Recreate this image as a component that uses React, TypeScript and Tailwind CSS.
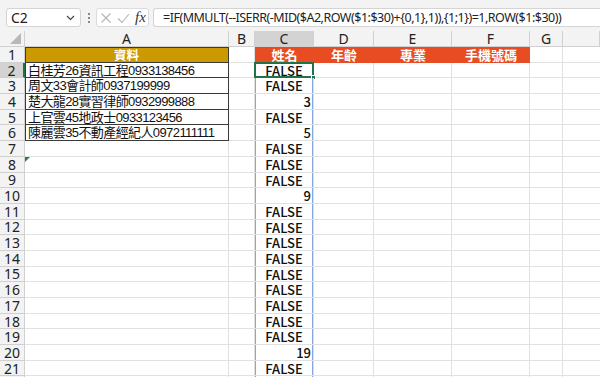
import React from 'react';

const FORMULA = '=IF(MMULT(--ISERR(-MID($A2,ROW($1:$30)+{0,1},1)),{1;1})=1,ROW($1:$30))';

const COLS = ['A', 'B', 'C', 'D', 'E', 'F', 'G', ''];

const A_DATA = [
  '資料',
  '白桂芳26資訊工程0933138456',
  '周文33會計師0937199999',
  '楚大龍28實習律師0932999888',
  '上官雲45地政士0933123456',
  '陳麗雲35不動產經紀人0972111111',
];

const HEADS: Record<number, string> = { 3: '姓名', 4: '年齡', 5: '專業', 6: '手機號碼' };

// spill results of C2:C23
const C_DATA: (string | number)[] = [
  'FALSE', 'FALSE', 3, 'FALSE', 5, 'FALSE', 'FALSE', 'FALSE', 9, 'FALSE',
  'FALSE', 'FALSE', 'FALSE', 'FALSE', 'FALSE', 'FALSE', 'FALSE', 'FALSE', 19, 'FALSE', 'FALSE',
];

const cellFont = { fontFamily: '"Noto Sans CJK TC", "Noto Sans", sans-serif' };
// digits in column A are fixed width in the original, so latin comes from Liberation Sans
const dataFont = { fontFamily: '"Liberation Sans", "Noto Sans CJK TC", sans-serif' };
const uiFont = { fontFamily: '"Noto Sans", "Open Sans", sans-serif' };

function FormulaBar() {
  return (
    <div className="flex h-[31px] items-start bg-[#f3f3f3] pt-[8px] pl-[6px]" style={uiFont}>
      <div className="flex h-[19px] w-[75px] items-center justify-between rounded-[3px] border border-[#d4d4d4] bg-white pl-[4px] pr-[5px] text-[14px] leading-[17px] text-[#222]">
        <span>C2</span>
        <svg width="9" height="6" viewBox="0 0 9 6">
          <path d="M1 1l3.5 3.5L8 1" stroke="#444" strokeWidth="1.2" fill="none" />
        </svg>
      </div>
      <div className="ml-[6px] flex h-[19px] w-[3px] flex-col items-center justify-center gap-[2px]">
        <span className="h-[2px] w-[2px] bg-[#888]" />
        <span className="h-[2px] w-[2px] bg-[#888]" />
        <span className="h-[2px] w-[2px] bg-[#888]" />
      </div>
      <div className="ml-[6px] flex h-[19px] w-[53px] items-center rounded-[3px] border border-[#dcdcdc] bg-white pl-[3px]">
        <svg width="12" height="12" viewBox="0 0 12 12">
          <path d="M1.5 1.5l9 9M10.5 1.5l-9 9" stroke="#b4b4b4" strokeWidth="1.1" />
        </svg>
        <svg className="ml-[5px]" width="13" height="12" viewBox="0 0 13 12">
          <path d="M1 6.5l4 4L12 2" stroke="#b4b4b4" strokeWidth="1.1" fill="none" />
        </svg>
        <span
          className="ml-[5px] text-[15px] leading-none italic text-[#333]"
          style={{ fontFamily: '"Liberation Serif", serif' }}
        >
          fx
        </span>
      </div>
      <div className="ml-[4px] flex h-[19px] flex-1 items-center overflow-hidden whitespace-nowrap rounded-l-[3px] border border-r-0 border-[#d4d4d4] bg-white pl-[9px] text-[12.5px] leading-[17px] tracking-[-0.5px] text-[#222]">
        {FORMULA}
      </div>
    </div>
  );
}

function ColumnHeaders() {
  return (
    <>
      <div className="flex items-end justify-end border-r border-b border-[#d0d0d0] bg-[#f3f3f3] pr-[3px] pb-[2px]">
        <svg width="11" height="11" viewBox="0 0 11 11">
          <polygon points="11,0 11,11 0,11" fill="#b8b8b8" />
        </svg>
      </div>
      {COLS.map((c, i) => (
        <div
          key={i}
          className={
            'flex items-center justify-center border-r border-b border-[#d0d0d0] text-[14px] leading-[15px] text-[#222] ' +
            (c === 'C' ? 'bg-[#d3d3d3]' : 'bg-[#f3f3f3]')
          }
          style={uiFont}
        >
          {c}
        </div>
      ))}
    </>
  );
}

function Row({ r }: { r: number }) {
  const aText = A_DATA[r - 1];
  const inTable = r <= 6;
  const cVal = r >= 2 ? C_DATA[r - 2] : undefined;

  return (
    <>
      <div
        className={
          'flex items-center justify-center border-b border-[#d0d0d0] text-[14px] leading-[15px] text-[#222] ' +
          (r === 2 ? 'border-r-2 border-r-[#217346] bg-[#d3d3d3]' : 'border-r bg-[#f3f3f3]')
        }
        style={uiFont}
      >
        {r}
      </div>

      {/* A */}
      <div
        className={
          'relative whitespace-nowrap border-r border-b leading-[15px] ' +
          (r === 1
            ? 'border-[#3a3a3a] bg-[#cc9900] text-center text-[12.5px] font-bold text-white shadow-[inset_1px_1px_0_#3a3a3a]'
            : inTable
            ? 'border-[#3a3a3a] pl-[3px] text-[13px] tracking-[-0.6px] text-[#111] shadow-[inset_1px_0_0_#3a3a3a]'
            : 'border-[#e1e1e1]')
        }
        style={r === 1 ? cellFont : dataFont}
      >
        {aText}
        {r === 8 && (
          <span className="absolute top-0 left-0 h-0 w-0 border-t-[5px] border-r-[5px] border-t-[#1e8a3c] border-r-transparent" />
        )}
      </div>

      {/* B */}
      <div className="border-r border-b border-[#e1e1e1]" />

      {/* C */}
      {r === 1 ? (
        <div
          className="flex items-center justify-center border-b border-[#e84c22] bg-[#e84c22] text-[13px] leading-[15px] font-bold text-white"
          style={cellFont}
        >
          {HEADS[3]}
        </div>
      ) : (
        <div
          className={
            'relative border-r border-b border-[#e1e1e1] text-[13px] leading-[15px] font-medium text-[#111] shadow-[inset_1px_0_0_#86a6e2,inset_-1px_0_0_#86a6e2] ' +
            (typeof cVal === 'number' ? 'pr-[2px] text-right' : 'text-center')
          }
          style={cellFont}
        >
          {cVal}
          {r === 2 && (
            <>
              <span className="absolute -top-px -left-px -right-px -bottom-px border-2 border-[#217346]" />
              <span className="absolute -right-[3px] -bottom-[3px] h-[5px] w-[5px] border border-white bg-[#217346]" />
            </>
          )}
        </div>
      )}

      {/* D E F */}
      {[4, 5, 6].map((ci) =>
        r === 1 ? (
          <div
            key={ci}
            className="flex items-center justify-center border-b border-[#e84c22] bg-[#e84c22] text-[13px] leading-[15px] font-bold text-white"
            style={cellFont}
          >
            {HEADS[ci]}
          </div>
        ) : (
          <div key={ci} className="border-r border-b border-[#e1e1e1]" />
        )
      )}

      {/* G and beyond */}
      <div className="border-r border-b border-[#e1e1e1]" />
      <div className="border-b border-[#e1e1e1]" />
    </>
  );
}

export default function App() {
  const rows = Array.from({ length: 22 }, (_, i) => i + 1);
  return (
    <div className="h-[377px] w-[600px] overflow-hidden bg-white">
      <FormulaBar />
      <div className="grid grid-cols-[25px_204px_26px_59px_60px_78px_78px_33px_1fr] grid-rows-[16px_repeat(22,15.7px)]">
        <ColumnHeaders />
        {rows.map((r) => (
          <Row key={r} r={r} />
        ))}
      </div>
    </div>
  );
}
